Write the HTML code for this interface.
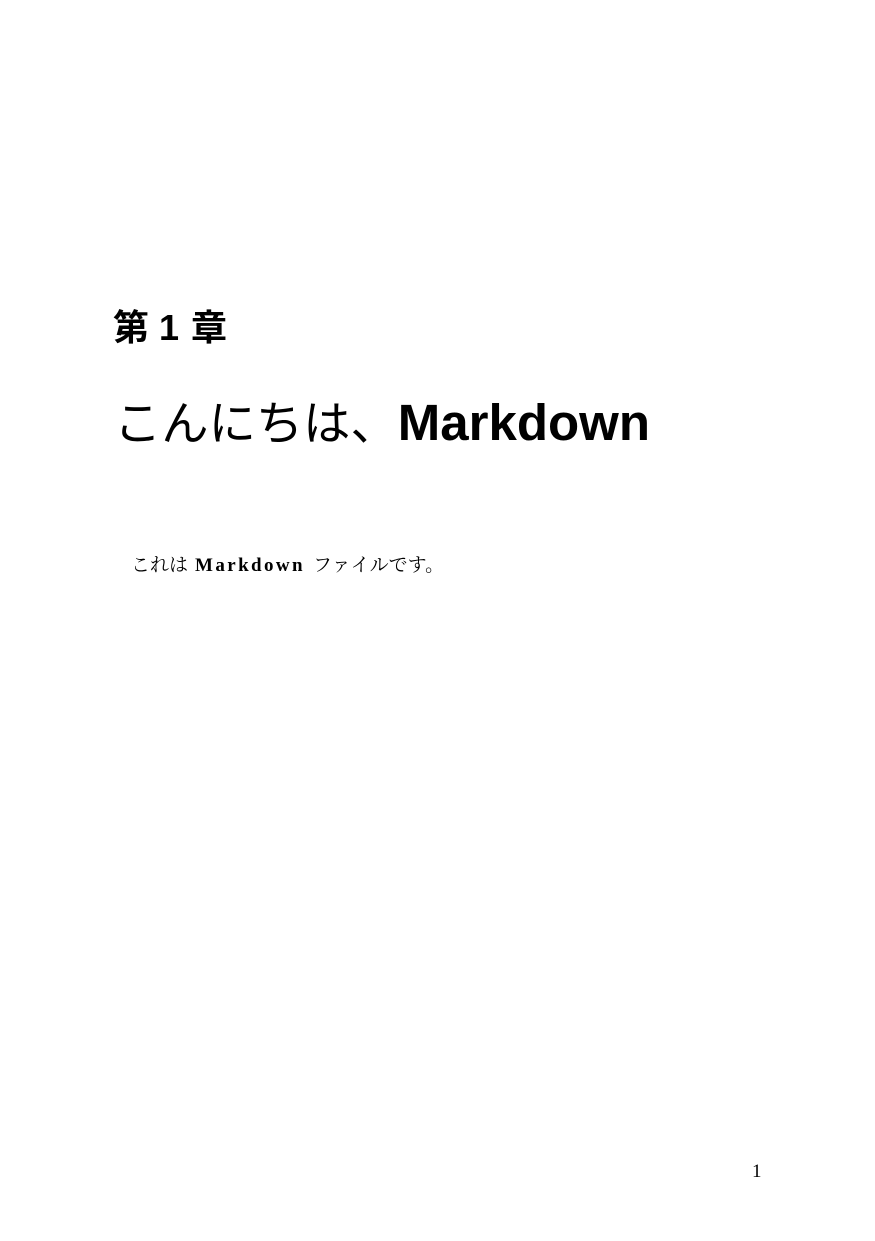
<!DOCTYPE html>
<html><head><meta charset="utf-8"><style>
html,body{margin:0;padding:0;background:#fff;width:875px;height:1241px;overflow:hidden;position:relative;color:#000}
.a{position:absolute;white-space:nowrap;line-height:1}
</style></head><body>
<div class="a" style="left:113px;top:310px;font-family:'Liberation Sans','Noto Sans CJK JP',sans-serif;font-weight:bold;font-size:36px;">第<span style="margin:0 12px 0 10px">1</span>章</div>
<div class="a" style="left:114px;top:396px;font-size:51px;"><span style="font-family:'Noto Sans CJK JP',sans-serif;font-weight:400;font-size:47.3px;">こんにちは、</span><span style="font-family:'Liberation Sans',sans-serif;font-weight:bold;">Markdown</span></div>
<div class="a" style="left:131px;top:556px;font-size:19px;font-family:'Liberation Serif','Noto Serif CJK SC',serif;">これは<b style="letter-spacing:2.4px;margin:0 8px 0 7px">Markdown</b>ファイルです。</div>
<div class="a" style="left:752px;top:1162px;font-size:19px;font-family:'Liberation Serif',serif;">1</div>
</body></html>
